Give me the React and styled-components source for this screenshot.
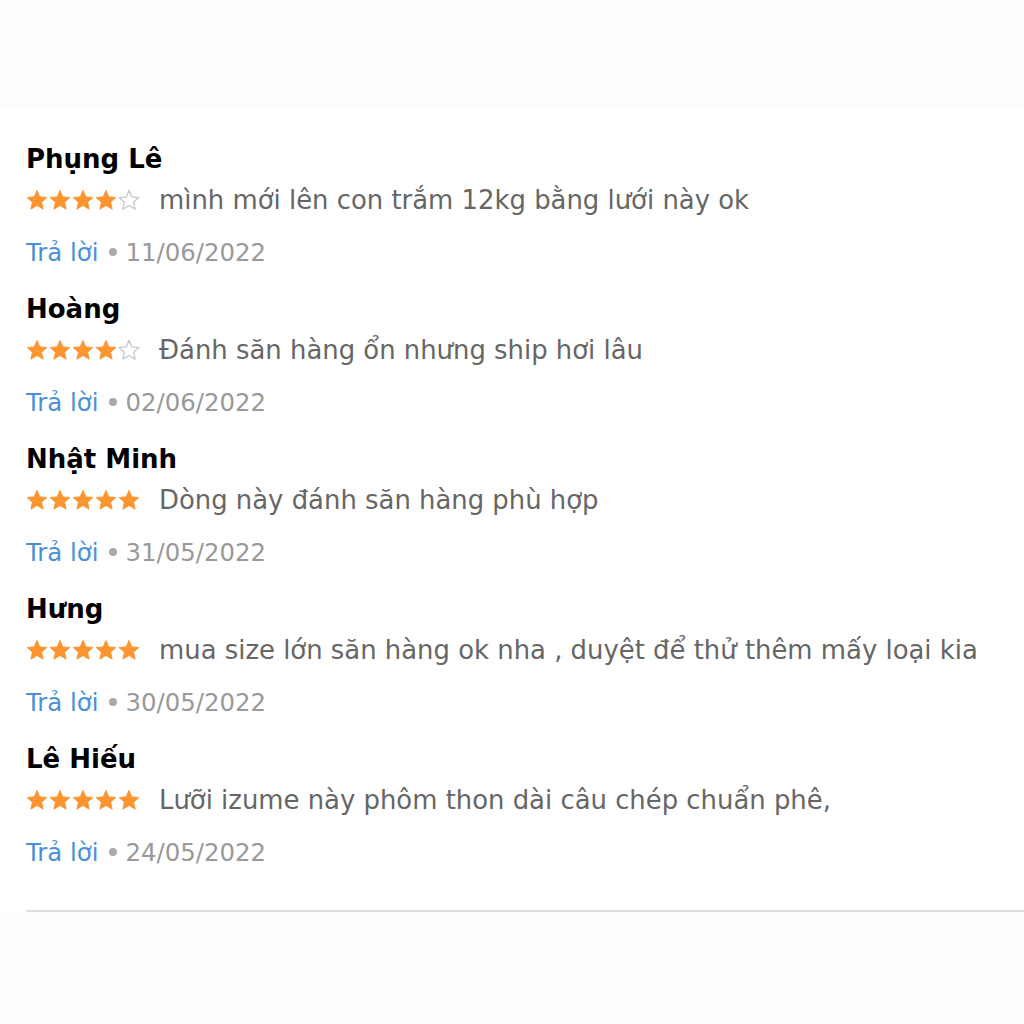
import React from 'react'
import styled, { createGlobalStyle } from 'styled-components'

const GlobalStyle = createGlobalStyle`
  body {
    margin: 0;
    background: #fdfdfd;
    font-family: "DejaVu Sans", Verdana, sans-serif;
  }
`

const TopBand = styled.div`
  height: 108px;
  background: #fdfdfd;
`

const Section = styled.div`
  background: #fff;
  padding: 29px 0 0 26px;
`

const List = styled.div`
  display: flex;
  flex-direction: column;
`

const Review = styled.div`
  display: flex;
  flex-direction: column;
  margin-bottom: 6px;
`

const Name = styled.div`
  height: 42px;
  line-height: 44px;
  font-weight: bold;
  font-size: 26px;
  color: #000;
`

const CommentRow = styled.div`
  display: flex;
  align-items: center;
  height: 42px;
  gap: 19px;
`

const Stars = styled.div`
  display: flex;
  gap: 1px;
`

const Comment = styled.span`
  font-size: 25.9px;
  color: #666;
  white-space: nowrap;
`

const ReplyRow = styled.div`
  display: flex;
  align-items: center;
  height: 60px;
  padding-top: 2px;
  box-sizing: border-box;
  font-size: 24.4px;
  color: #999;
`

const Reply = styled.a`
  color: #4a8fd8;
  text-decoration: none;
`

const Dot = styled.span`
  display: inline-block;
  width: 8px;
  height: 8px;
  border-radius: 50%;
  background: #aaa;
  margin: 0 9px 0 10px;
`

const Divider = styled.div`
  height: 2px;
  background: #dedede;
  margin-top: 23px;
`

const Bottom = styled.div`
  height: 112px;
  background: #fdfdfd;
`

const Star = ({ filled }) => (
  <svg width="22" height="22" viewBox="0 0 24 24">
    <polygon
      points="12,1.5 15.1,8.6 22.8,9.3 17,14.4 18.7,22 12,18 5.3,22 7,14.4 1.2,9.3 8.9,8.6"
      fill={filled ? '#fc9430' : 'none'}
      stroke={filled ? '#fc9430' : '#c8c8c8'}
      strokeWidth={filled ? 1 : 1.4}
      strokeLinejoin="round"
    />
  </svg>
)

const reviews = [
  { name: 'Phụng Lê', rating: 4, text: 'mình mới lên con trắm 12kg bằng lưới này ok', date: '11/06/2022' },
  { name: 'Hoàng', rating: 4, text: 'Đánh săn hàng ổn nhưng ship hơi lâu', date: '02/06/2022' },
  { name: 'Nhật Minh', rating: 5, text: 'Dòng này đánh săn hàng phù hợp', date: '31/05/2022' },
  { name: 'Hưng', rating: 5, text: 'mua size lớn săn hàng ok nha , duyệt để thử thêm mấy loại kia', date: '30/05/2022' },
  { name: 'Lê Hiếu', rating: 5, text: 'Lưỡi izume này phôm thon dài câu chép chuẩn phê,', date: '24/05/2022' },
]

export default function App() {
  return (
    <>
      <GlobalStyle />
      <TopBand />
      <Section>
        <List>
          {reviews.map(r => (
            <Review key={r.name}>
              <Name>{r.name}</Name>
              <CommentRow>
                <Stars>
                  {[1, 2, 3, 4, 5].map(i => <Star key={i} filled={i <= r.rating} />)}
                </Stars>
                <Comment>{r.text}</Comment>
              </CommentRow>
              <ReplyRow>
                <Reply href="#">Trả lời</Reply>
                <Dot />
                {r.date}
              </ReplyRow>
            </Review>
          ))}
        </List>
        <Divider />
      </Section>
      <Bottom />
    </>
  )
}
